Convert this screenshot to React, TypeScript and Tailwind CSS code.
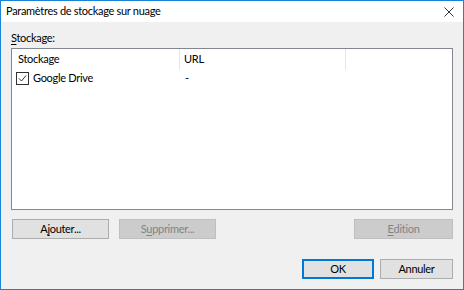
import React from 'react';

const font = { fontFamily: 'Lato, "Liberation Sans", sans-serif' };

function Button({
  label,
  mnemonic,
  disabled,
  primary,
  className,
}: {
  label: string;
  mnemonic?: number;
  disabled?: boolean;
  primary?: boolean;
  className?: string;
}) {
  const text =
    mnemonic === undefined ? (
      label
    ) : (
      <>
        {label.slice(0, mnemonic)}
        <span className="underline underline-offset-2">{label[mnemonic]}</span>
        {label.slice(mnemonic + 1)}
      </>
    );

  return (
    <div
      className={
        'flex h-[20px] items-center justify-center ' +
        (disabled
          ? 'border border-[#bfbfbf] bg-[#cccccc] text-[#838383] '
          : primary
            ? 'border-2 border-[#0078d7] bg-[#e1e1e1] text-black '
            : 'border border-[#adadad] bg-[#e1e1e1] text-black ') +
        (className ?? '')
      }
    >
      {text}
    </div>
  );
}

export default function App() {
  return (
    <div
      className="flex h-[290px] w-[464px] flex-col border border-[#1883d7] bg-[#f0f0f0] text-[11px] tracking-[-0.3px] text-black"
      style={font}
    >
      {/* title bar */}
      <div className="flex h-[21px] items-center justify-between bg-white pl-[5px] pr-[9px]">
        <span>Paramètres de stockage sur nuage</span>
        <svg width="10" height="10" viewBox="0 0 10 10" className="text-[#333]">
          <path d="M0.5 0.5 L9.5 9.5 M9.5 0.5 L0.5 9.5" stroke="currentColor" strokeWidth="1" />
        </svg>
      </div>

      <div className="flex flex-1 flex-col px-[10px]">
        <div className="mt-[8px] h-[18px] leading-[16px]">
          <span className="underline underline-offset-2">S</span>tockage:
        </div>

        {/* list view */}
        <div className="h-[162px] border border-[#828790] bg-white">
          <div className="flex h-[21px]">
            <div className="flex w-[168px] items-center border-r border-[#e5e5e5] pl-[6px]">
              Stockage
            </div>
            <div className="flex w-[166px] items-center border-r border-[#e5e5e5] pl-[4px]">
              URL
            </div>
          </div>
          <div className="flex h-[17px] items-center">
            <div className="flex w-[169px] items-center pl-[4px]">
              <span className="flex h-[13px] w-[13px] items-center justify-center border border-[#333] bg-white">
                <svg width="9" height="9" viewBox="0 0 9 9">
                  <path d="M1 4.5 L3.5 7 L8 1.5" fill="none" stroke="#333" strokeWidth="1" />
                </svg>
              </span>
              <span className="ml-[4px]">Google Drive</span>
            </div>
            <div className="pl-[4px]">-</div>
          </div>
        </div>

        <div className="mt-[9px] flex">
          <Button label="Ajouter..." mnemonic={1} className="ml-[1px] w-[97px]" />
          <Button label="Supprimer..." mnemonic={1} disabled className="ml-[10px] w-[97px]" />
          <Button label="Edition" mnemonic={0} disabled className="ml-auto w-[99px]" />
        </div>

        <div className="mt-[20px] flex justify-end gap-[6px]">
          <Button label="OK" primary className="w-[72px]" />
          <Button label="Annuler" className="w-[73px]" />
        </div>
      </div>
    </div>
  );
}
